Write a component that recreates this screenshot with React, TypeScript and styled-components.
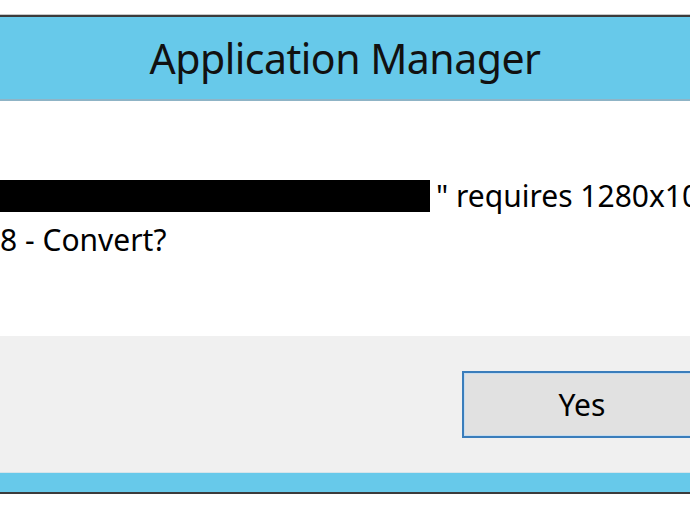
import React from "react";
import styled, { createGlobalStyle } from "styled-components";

const Global = createGlobalStyle`
  html, body { margin: 0; padding: 0; background: #ffffff; overflow: hidden; }
  body { width: 690px; height: 518px; }
`;

const Page = styled.div`
  width: 690px;
  height: 518px;
  overflow: hidden;
  padding-top: 14px;
  box-sizing: border-box;
  background: #ffffff;
`;

const Window = styled.div`
  display: flex;
  flex-direction: column;
  background: #67c9ea;
  border-top: 1px solid #c8c8c8;
  box-shadow: inset 0 2px 0 #3b3b3b;
  border-bottom: 2px solid #3b3b3b;
`;

const TitleBar = styled.div`
  height: 82px;
  margin-top: 2px;
  display: flex;
  align-items: center;
  justify-content: center;
  font-family: "Noto Sans", "Open Sans", sans-serif;
  font-size: 41px;
  letter-spacing: -0.5px;
  color: #111111;
  border-bottom: 2px solid #8fb4c6;
`;

const Client = styled.div`
  display: flex;
  flex-direction: column;
  background: #ffffff;
`;

const Content = styled.div`
  height: 235px;
  padding-top: 73px;
  box-sizing: border-box;
  font-family: "Noto Sans", "Open Sans", sans-serif;
  font-size: 30px;
  line-height: 44px;
  color: #000000;
`;

const Line = styled.div`
  display: flex;
  align-items: center;
  white-space: nowrap;
  overflow: hidden;
`;

const Redacted = styled.span`
  display: inline-block;
  width: 430px;
  height: 32px;
  margin-right: 6px;
  background: #000000;
  flex: none;
`;

const Footer = styled.div`
  height: 136px;
  background: #f0f0f0;
  display: flex;
  align-items: center;
  padding-left: 462px;
  overflow: hidden;
`;

const Button = styled.div`
  flex: none;
  width: 240px;
  height: 67px;
  box-sizing: border-box;
  border: 2px solid #3a7dbb;
  box-shadow: inset 0 0 0 1px #c6dcef;
  background: #e1e1e1;
  display: flex;
  align-items: center;
  justify-content: center;
  font-family: "Noto Sans", "Open Sans", sans-serif;
  font-size: 30px;
  color: #000000;
`;

const BottomFrame = styled.div`
  height: 19px;
  border-top: 1px solid #d6e4ea;
  background: #67c9ea;
`;

export default function App() {
  return (
    <>
      <Global />
      <Page>
        <Window>
          <TitleBar>Application Manager</TitleBar>
          <Client>
            <Content>
              <Line>
                <Redacted />
                <span>" requires 1280x10</span>
              </Line>
              <Line>8 - Convert?</Line>
            </Content>
            <Footer>
              <Button>Yes</Button>
            </Footer>
          </Client>
          <BottomFrame />
        </Window>
      </Page>
    </>
  );
}
